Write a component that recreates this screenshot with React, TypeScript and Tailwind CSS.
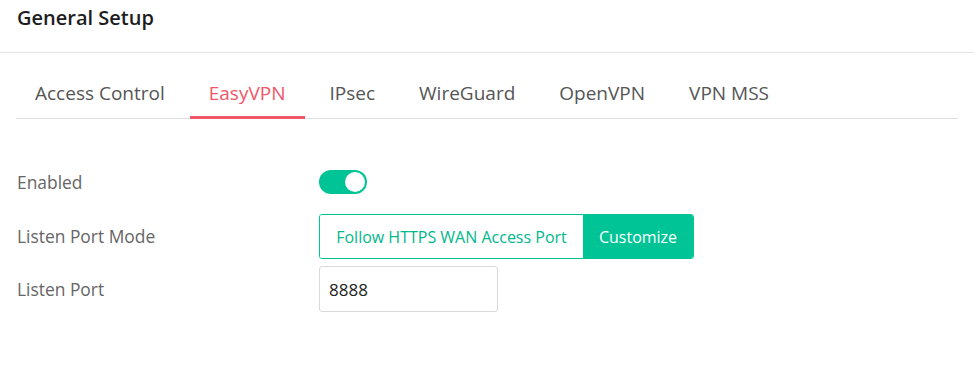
import { useState } from 'react';

const TABS = ['Access Control', 'EasyVPN', 'IPsec', 'WireGuard', 'OpenVPN', 'VPN MSS'];

export default function App() {
  const [active, setActive]   = useState('EasyVPN');
  const [enabled, setEnabled] = useState(true);
  const [mode, setMode]       = useState<'follow' | 'custom'>('custom');
  const [port, setPort]       = useState('8888');

  return (
    <div className="w-[974px] h-[365px] bg-white font-['Open_Sans',sans-serif] overflow-hidden">
      {/* Header */}
      <div className="h-[53px] border-b border-[#e6e6e6] pl-[17px] pt-[4px]">
        <h1 className="text-[20px] leading-[28px] font-semibold text-[#1d1d1d]">General Setup</h1>
      </div>

      {/* Tabs */}
      <div className="mx-4 mt-[15px] flex gap-[6px] border-b border-[#e0e0e0]">
        {TABS.map(t => (
          <button
            key={t}
            onClick={() => setActive(t)}
            className={`relative h-[50px] px-[19px] text-[19px] leading-[50px] whitespace-nowrap
                        ${active === t ? 'text-[#f0566a]' : 'text-[#555555]'}`}
          >
            {t}
            {active === t && (
              <span className="absolute left-0 right-0 -bottom-px h-[3px] bg-[#f0566a]" />
            )}
          </button>
        ))}
      </div>

      {/* Form */}
      <div className="pl-[17px] pt-[41px] text-[17.4px] text-[#666666]">
        <div className="flex items-center h-[44px]">
          <span className="w-[302px]">Enabled</span>
          <button
            onClick={() => setEnabled(v => !v)}
            className={`w-[48px] h-[24px] rounded-full p-[2px] flex items-center transition-colors
                        ${enabled ? 'bg-[#00c495] justify-end' : 'bg-[#cccccc] justify-start'}`}
          >
            <span className="w-[20px] h-[20px] rounded-full bg-white" />
          </button>
        </div>

        <div className="flex items-center h-[45px] mt-[10px]">
          <span className="w-[302px]">Listen Port Mode</span>
          <div className="flex h-[45px] rounded-[3px] border border-[#00c495] overflow-hidden">
            <button
              onClick={() => setMode('follow')}
              className={`w-[263px] h-full text-[16px] ${mode === 'follow' ? 'bg-[#00c495] text-white' : 'bg-white text-[#00b88c]'}`}
            >
              Follow HTTPS WAN Access Port
            </button>
            <button
              onClick={() => setMode('custom')}
              className={`w-[110px] h-full text-[16px] ${mode === 'custom' ? 'bg-[#00c495] text-white' : 'bg-white text-[#00b88c]'}`}
            >
              Customize
            </button>
          </div>
        </div>

        <div className="flex items-center h-[46px] mt-[7px]">
          <span className="w-[302px]">Listen Port</span>
          <input
            value={port}
            onChange={e => setPort(e.target.value)}
            className="w-[179px] h-[46px] rounded-[3px] border border-[#d9d9d9] px-[9px] text-[17px] text-[#222222] outline-none focus:border-[#00c495]"
          />
        </div>
      </div>
    </div>
  );
}
